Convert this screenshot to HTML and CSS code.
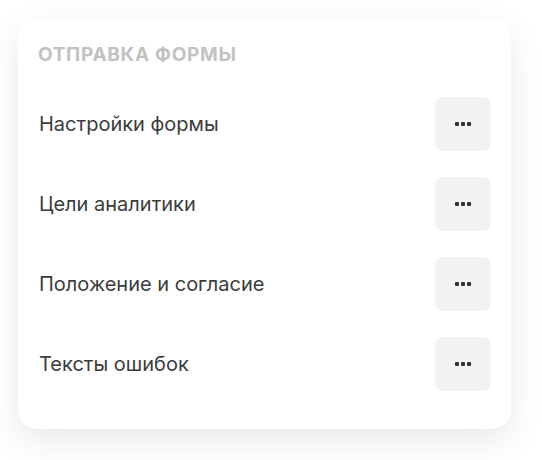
FILE: index.html
```html
<!DOCTYPE html>
<html lang="ru">
<head>
<meta charset="utf-8">
<link rel="stylesheet" href="styles.css">
</head>
<body>
<div class="card">
  <div class="title">Отправка формы</div>
  <div class="list">
    <div class="row"><span class="label">Настройки формы</span><button class="more"><span></span><span></span><span></span></button></div>
    <div class="row"><span class="label">Цели аналитики</span><button class="more"><span></span><span></span><span></span></button></div>
    <div class="row"><span class="label">Положение и согласие</span><button class="more"><span></span><span></span><span></span></button></div>
    <div class="row"><span class="label">Тексты ошибок</span><button class="more"><span></span><span></span><span></span></button></div>
  </div>
</div>
</body>
</html>
```

FILE: styles.css
```css
html, body {
  margin: 0;
  background: #ffffff;
}
body {
  min-height: 460px;
  box-sizing: border-box;
  padding: 19px 31px 31px 18px;
  font-family: Inter, "Noto Sans", sans-serif;
}
.card {
  width: 493px;
  box-sizing: border-box;
  background: #fff;
  border-radius: 20px;
  box-shadow: 0 12px 36px rgba(0, 0, 0, 0.09);
  padding: 24px 20px 38px 20px;
}
.title {
  font-size: 19px;
  line-height: 24px;
  font-weight: 700;
  text-transform: uppercase;
  color: #c2c2c2;
  letter-spacing: 0.7px;
}
.list {
  margin-top: 30px;
  display: flex;
  flex-direction: column;
  gap: 26px;
}
.row {
  display: flex;
  align-items: center;
  justify-content: space-between;
  height: 54px;
}
.label {
  font-size: 20px;
  color: #3c3c3c;
  padding-left: 1px;
}
.more {
  width: 56px;
  height: 54px;
  border: none;
  border-radius: 8px;
  background: #f2f2f2;
  display: flex;
  align-items: center;
  justify-content: center;
  gap: 2px;
  padding: 0;
}
.more span {
  width: 4px;
  height: 4px;
  background: #333;
  border-radius: 1px;
}
```
